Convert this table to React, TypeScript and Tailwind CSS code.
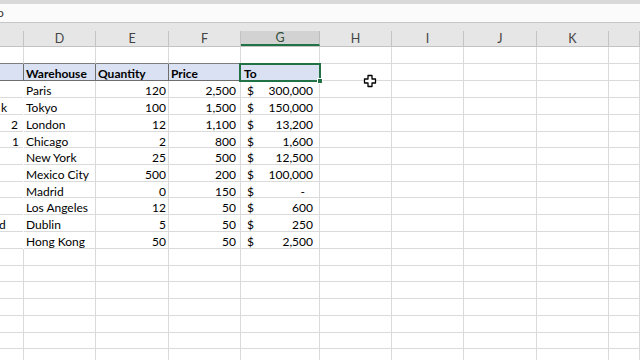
import React from "react";

// column widths (incl. right gridline)
const cols = [
  { key: "C", w: "w-[24px]" },
  { key: "D", w: "w-[72px]" },
  { key: "E", w: "w-[73px]" },
  { key: "F", w: "w-[72px]" },
  { key: "G", w: "w-[79px]" },
  { key: "H", w: "w-[72px]" },
  { key: "I", w: "w-[72px]" },
  { key: "J", w: "w-[73px]" },
  { key: "K", w: "w-[72px]" },
  { key: "L", w: "flex-1" },
];

type Row = {
  c?: React.ReactNode;
  wh: string;
  qty: string;
  price: string;
  total: string;
};

const rows: Row[] = [
  { wh: "Paris", qty: "120", price: "2,500", total: "300,000" },
  { c: <span className="pl-[1px]">k</span>, wh: "Tokyo", qty: "100", price: "1,500", total: "150,000" },
  { c: <span className="pl-[11px]">2</span>, wh: "London", qty: "12", price: "1,100", total: "13,200" },
  { c: <span className="pl-[12px]">1</span>, wh: "Chicago", qty: "2", price: "800", total: "1,600" },
  { wh: "New York", qty: "25", price: "500", total: "12,500" },
  { wh: "Mexico City", qty: "500", price: "200", total: "100,000" },
  { wh: "Madrid", qty: "0", price: "150", total: "-" },
  { wh: "Los Angeles", qty: "12", price: "50", total: "600" },
  { c: <span className="-ml-[1px]">d</span>, wh: "Dublin", qty: "5", price: "50", total: "250" },
  { wh: "Hong Kong", qty: "50", price: "50", total: "2,500" },
];

const dataHeights = ["h-[17px]", "h-[17px]", "h-[17px]", "h-[16px]", "h-[17px]", "h-[17px]", "h-[16px]", "h-[17px]", "h-[17px]", "h-[17px]"];
const emptyHeights = ["h-[17px]", "h-[16px]", "h-[17px]", "h-[17px]", "h-[17px]", "h-[16px]", "h-[17px]"];

const grid = "border-r border-b border-[#dadada]";
// cell text sits low, as in Excel
const cellText = "flex items-center pt-[4px]";

function EmptyCells({ from }: { from: number }) {
  return (
    <>
      {cols.slice(from).map((c) => (
        <div key={c.key} className={`${c.w} h-full shrink-0 ${grid}`} />
      ))}
    </>
  );
}

function CrossCursor() {
  return (
    <svg width="14" height="14" viewBox="0 0 14 14" className="absolute left-[363px] top-[74px]">
      <path
        d="M5 1.5 H9 V5 H12.5 V9 H9 V12.5 H5 V9 H1.5 V5 H5 Z"
        fill="#fff"
        stroke="#000"
        strokeWidth="1.3"
        strokeLinejoin="round"
      />
    </svg>
  );
}

export default function App() {
  return (
    <div className="relative w-[640px] h-[360px] overflow-hidden bg-white font-['Lato',sans-serif] text-[12px] text-black">
      {/* ribbon edge */}
      <div className="h-[4px] bg-[#d9d9d9]" />
      {/* formula bar */}
      <div className="h-[19px] bg-[#fbfbfb] border-b border-[#c6c6c6] flex items-center">
        <span className="-ml-[3px] text-[12px] leading-none text-[#333]">o</span>
      </div>
      <div className="h-[8px] bg-[#e6e6e6]" />

      {/* column headers */}
      <div className="flex h-[16px] bg-[#e6e6e6] border-b border-[#c3c3c3] text-[12.5px] text-[#444] leading-[14px]">
        {cols.map((c) =>
          c.key === "G" ? (
            <div
              key={c.key}
              className={`${c.w} shrink-0 h-full flex items-center justify-center bg-[#d2d2d2] border-r border-[#bdbdbd] border-b-2 border-b-[#217346] text-[#2f4f3a]`}
            >
              {c.key}
            </div>
          ) : (
            <div key={c.key} className={`${c.w} shrink-0 h-full flex items-center justify-center pt-[1px] border-r border-[#c3c3c3]`}>
              {c.key === "C" || c.key === "L" ? "" : c.key}
            </div>
          )
        )}
      </div>

      {/* row 1 */}
      <div className="flex h-[17px]">
        {cols.map((c, i) => (
          <div
            key={c.key}
            className={`${c.w} h-full shrink-0 border-r border-b ${i <= 4 ? "border-b-[#7d7d7d] border-r-[#dadada]" : "border-[#dadada]"}`}
          />
        ))}
      </div>

      {/* table header row */}
      <div className="relative flex h-[17px] font-bold leading-[12px]">
        <div className="w-[24px] shrink-0 h-full bg-[#d9e1f2] border-r border-b border-[#6e6e6e]" />
        <div className={`w-[72px] shrink-0 h-full bg-[#d9e1f2] border-r border-b border-[#6e6e6e] px-[2px] ${cellText}`}>Warehouse</div>
        <div className={`w-[73px] shrink-0 h-full bg-[#d9e1f2] border-r border-b border-[#6e6e6e] px-[2px] ${cellText}`}>Quantity</div>
        <div className={`w-[72px] shrink-0 h-full bg-[#d9e1f2] border-r border-b border-[#6e6e6e] px-[2px] ${cellText}`}>Price</div>
        <div className={`w-[79px] shrink-0 h-full bg-[#d9e1f2] border-r border-b border-[#6e6e6e] px-[3px] ${cellText}`}>To</div>
        <EmptyCells from={5} />
        {/* active cell */}
        <div className="absolute left-[239px] top-[-1px] w-[82px] h-[19px] border-2 border-[#217346]">
          <div className="absolute right-[-4px] bottom-[-4px] w-[6px] h-[6px] bg-[#217346] border border-white" />
        </div>
      </div>

      {/* data rows */}
      {rows.map((r, i) => (
        <div key={r.wh} className={`flex ${dataHeights[i]} leading-[12px]`}>
          <div className={`w-[23px] mr-[1px] shrink-0 h-full overflow-hidden whitespace-nowrap border-b border-[#dadada] ${cellText}`}>
            {r.c}
          </div>
          <div className={`w-[72px] shrink-0 h-full px-[2px] whitespace-nowrap ${grid} ${cellText}`}>{r.wh}</div>
          <div className={`w-[73px] shrink-0 h-full pr-[2px] justify-end ${grid} ${cellText}`}>{r.qty}</div>
          <div className={`w-[72px] shrink-0 h-full pr-[4px] justify-end ${grid} ${cellText}`}>{r.price}</div>
          <div className={`w-[79px] shrink-0 h-full pl-[6px] justify-between ${grid} ${cellText} ${r.total === "-" ? "pr-[14px]" : "pr-[6px]"}`}>
            <span>$</span>
            <span>{r.total}</span>
          </div>
          <EmptyCells from={5} />
        </div>
      ))}

      {/* empty rows */}
      {emptyHeights.map((h, i) => (
        <div key={i} className={`flex ${h}`}>
          <EmptyCells from={0} />
        </div>
      ))}

      <CrossCursor />
    </div>
  );
}
